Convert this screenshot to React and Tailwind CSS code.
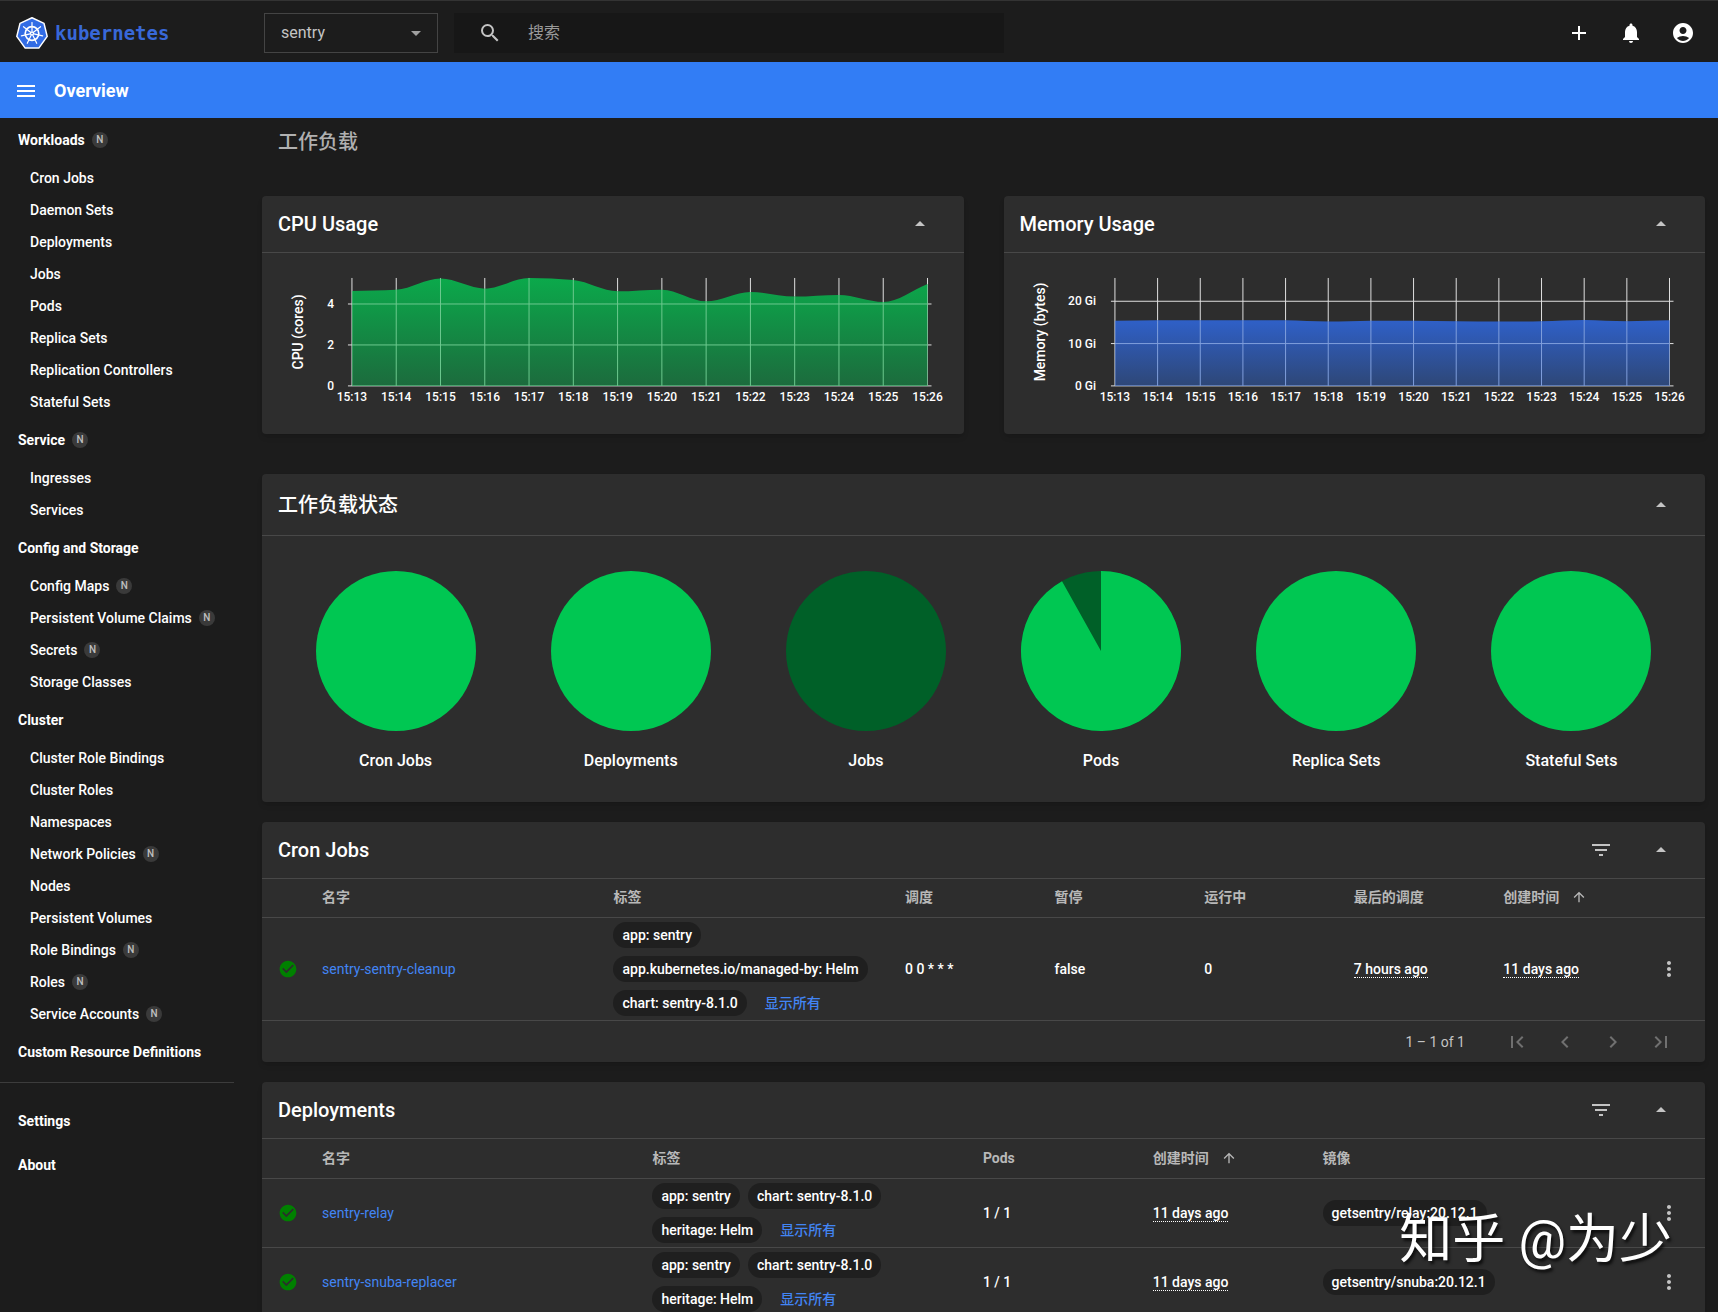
import React from 'react'
import {
  MdAccountCircle,
  MdAdd,
  MdArrowDropDown,
  MdArrowDropUp,
  MdArrowUpward,
  MdCheckCircle,
  MdChevronLeft,
  MdChevronRight,
  MdFilterList,
  MdFirstPage,
  MdLastPage,
  MdMenu,
  MdMoreVert,
  MdNotifications,
  MdSearch
} from 'react-icons/md'

const navSections = [
  {
    title: 'Workloads',
    namespaced: true,
    items: [
      { name: 'Cron Jobs' },
      { name: 'Daemon Sets' },
      { name: 'Deployments' },
      { name: 'Jobs' },
      { name: 'Pods' },
      { name: 'Replica Sets' },
      { name: 'Replication Controllers' },
      { name: 'Stateful Sets' }
    ]
  },
  {
    title: 'Service',
    namespaced: true,
    items: [{ name: 'Ingresses' }, { name: 'Services' }]
  },
  {
    title: 'Config and Storage',
    items: [
      { name: 'Config Maps', namespaced: true },
      { name: 'Persistent Volume Claims', namespaced: true },
      { name: 'Secrets', namespaced: true },
      { name: 'Storage Classes' }
    ]
  },
  {
    title: 'Cluster',
    items: [
      { name: 'Cluster Role Bindings' },
      { name: 'Cluster Roles' },
      { name: 'Namespaces' },
      { name: 'Network Policies', namespaced: true },
      { name: 'Nodes' },
      { name: 'Persistent Volumes' },
      { name: 'Role Bindings', namespaced: true },
      { name: 'Roles', namespaced: true },
      { name: 'Service Accounts', namespaced: true }
    ]
  },
  { title: 'Custom Resource Definitions', items: [] }
]

const times = [
  '15:13', '15:14', '15:15', '15:16', '15:17', '15:18', '15:19',
  '15:20', '15:21', '15:22', '15:23', '15:24', '15:25', '15:26'
]

const cpuValues = [4.63, 4.69, 5.24, 4.75, 5.27, 5.17, 4.62, 4.7, 4.13, 4.59, 4.36, 4.44, 4.1, 4.98]
const memoryValues = [15.4, 15.5, 15.5, 15.5, 15.5, 15.2, 15.4, 15.4, 15.3, 15.2, 15.3, 15.6, 15.3, 15.5]

// share = part of the pie that is running
const statuses = [
  { name: 'Cron Jobs', share: 1 },
  { name: 'Deployments', share: 1 },
  { name: 'Jobs', share: 0 },
  { name: 'Pods', share: 0.919 },
  { name: 'Replica Sets', share: 1 },
  { name: 'Stateful Sets', share: 1 }
]

const deployments = [
  { name: 'sentry-relay', image: 'getsentry/relay:20.12.1' },
  { name: 'sentry-snuba-replacer', image: 'getsentry/snuba:20.12.1' }
]

// Monotone cubic through the points, so the area never overshoots its values
const monotonePath = (points) => {
  const n = points.length
  const slopes = []
  for (let i = 0; i < n - 1; i++) {
    slopes.push((points[i + 1].y - points[i].y) / (points[i + 1].x - points[i].x))
  }
  const tangents = points.map((_, i) => {
    if (i === 0) return slopes[0]
    if (i === n - 1) return slopes[n - 2]
    const a = slopes[i - 1]
    const b = slopes[i]
    if (a * b <= 0) return 0
    return Math.sign(a) * Math.min(Math.abs(a), Math.abs(b), Math.abs(a + b) / 4) * 2
  })
  let d = `M${points[0].x},${points[0].y}`
  for (let i = 0; i < n - 1; i++) {
    const p = points[i]
    const q = points[i + 1]
    const dx = (q.x - p.x) / 3
    d += `C${p.x + dx},${p.y + dx * tangents[i]} ${q.x - dx},${q.y - dx * tangents[i + 1]} ${q.x},${q.y}`
  }
  return d
}

const KubernetesLogo = () => {
  const spokes = [0, 1, 2, 3, 4, 5, 6].map((i) => (i * 360) / 7)
  return (
    <svg viewBox="0 0 32 32" className="w-8 h-8 shrink-0" aria-hidden="true">
      <path
        d="M16 0.8 L28 6.4 L31.2 19.4 L22.8 31.1 H9.2 L0.8 19.4 L4 6.4 Z"
        fill="#326ce5"
        stroke="#fff"
        strokeWidth="1.5"
        strokeLinejoin="round"
      />
      <g fill="none" stroke="#fff" strokeLinecap="round">
        <circle cx="16" cy="16.5" r="6.8" strokeWidth="1.7" />
        {spokes.map((angle) => (
          <path key={angle} d="M16 14.6 V5.6" strokeWidth="1.2" transform={`rotate(${angle} 16 16.5)`} />
        ))}
      </g>
      <circle cx="16" cy="16.5" r="2.1" fill="#fff" />
      <circle cx="16" cy="16.5" r="0.8" fill="#326ce5" />
    </svg>
  )
}

const Badge = () => (
  <span className="w-4 h-4 rounded-full bg-[#3a3a3a] text-[#c0c0c0] text-[10px] font-medium flex items-center justify-center">
    N
  </span>
)

const IconButton = ({ icon: Icon, label, className = '' }) => (
  <button type="button" aria-label={label} className={`w-6 h-6 flex items-center justify-center ${className}`}>
    <Icon className="w-6 h-6" />
  </button>
)

const Header = () => (
  <header className="h-[62px] shrink-0 border-t border-[#333333] flex items-center pt-0.5 pl-4 pr-[23px]">
    <a href="#" className="w-[248px] shrink-0 flex items-center gap-[7px] text-[#3868d8]">
      <KubernetesLogo />
      <span className="font-['DejaVu_Sans_Mono',monospace] text-[19px] leading-6 font-bold">kubernetes</span>
    </a>
    <div className="relative w-[174px] shrink-0">
      <select
        aria-label="Namespace"
        className="appearance-none w-full h-10 pl-4 pr-10 border border-[#444444] bg-transparent text-[#c4c4c4] text-base"
      >
        <option>sentry</option>
      </select>
      <MdArrowDropDown className="absolute right-2.5 top-2 w-6 h-6 text-[#a0a0a0] pointer-events-none" />
    </div>
    <div className="ml-4 w-[550px] h-10 bg-[#171717] flex items-center pl-6">
      <MdSearch className="w-6 h-6 shrink-0 text-[#c4c4c4]" />
      <input
        type="search"
        aria-label="搜索"
        placeholder="搜索"
        className="flex-1 min-w-0 h-full pl-[26px] bg-transparent outline-none text-base placeholder-[#9a9a9a]"
      />
    </div>
    <div className="ml-auto flex items-center gap-7">
      <IconButton icon={MdAdd} label="Create" />
      <IconButton icon={MdNotifications} label="Notifications" />
      <IconButton icon={MdAccountCircle} label="Account" />
    </div>
  </header>
)

const Sidebar = () => (
  <nav aria-label="Main" className="w-[234px] shrink-0 text-sm leading-5">
    {navSections.map((section) => (
      <div key={section.title}>
        <div className="h-11 pl-[18px] flex items-center gap-[7px] font-bold">
          <a href="#">{section.title}</a>
          {section.namespaced && <Badge />}
        </div>
        <ul>
          {section.items.map((item) => (
            <li key={item.name} className="h-8 pl-[30px] flex items-center gap-[7px] font-medium">
              <a href="#">{item.name}</a>
              {item.namespaced && <Badge />}
            </li>
          ))}
        </ul>
      </div>
    ))}
    <div className="mt-2 mb-4 border-t border-[#3c3c3c]" />
    {['Settings', 'About'].map((name) => (
      <div key={name} className="h-11 pl-[18px] flex items-center font-bold">
        <a href="#">{name}</a>
      </div>
    ))}
  </nav>
)

const Card = ({ title, filter, tall, children }) => (
  <section className="bg-[#2d2d2d] rounded shadow-md">
    <div
      className={`border-b border-[#484848] pl-4 pr-8 flex items-center ${tall ? 'h-[62px] pt-0.5' : 'h-[57px]'}`}
    >
      <h2 className="text-xl leading-6 font-medium">{title}</h2>
      <div className="ml-auto flex items-center gap-9 text-[#c4c4c4]">
        {filter && <IconButton icon={MdFilterList} label="Filter" />}
        <IconButton icon={MdArrowDropUp} label="Collapse" />
      </div>
    </div>
    {children}
  </section>
)

const UsageChart = ({ id, label, labelX, left, right, tickX, max, ticks, unit, values, colors }) => {
  const bottom = 133
  const top = 25
  const step = (right - left) / (values.length - 1)
  const toX = (i) => left + i * step
  const toY = (value) => bottom - (value / max) * (bottom - top)
  const line = monotonePath(values.map((value, i) => ({ x: toX(i), y: toY(value) })))
  const area = `${line}L${right},${bottom}L${left},${bottom}Z`
  const grid = [
    ...ticks.map((tick) => `M${left - 4},${toY(tick)}H${right + 4}`),
    ...times.map((_, i) => `M${toX(i)},${top}V${bottom}`)
  ].join('')

  return (
    <svg viewBox="0 0 702 181" className="block w-full h-auto" role="img" aria-label={label}>
      <defs>
        <linearGradient id={id} x1="0" y1="0" x2="0" y2="1">
          <stop offset="0" stopColor={colors[0]} />
          <stop offset="1" stopColor={colors[1]} />
        </linearGradient>
        <clipPath id={`${id}-area`}>
          <path d={area} />
        </clipPath>
      </defs>

      {/* Grid: bright outside the area, tinted where the area covers it */}
      <path d={grid} stroke="#e0e0e0" />
      <path d={area} fill={`url(#${id})`} />
      <path d={grid} stroke={colors[2]} clipPath={`url(#${id}-area)`} />

      <g fill="#fff" fontSize="12" fontWeight="500">
        {ticks.map((tick) => (
          <text key={tick} x={tickX} y={toY(tick) + 4} textAnchor="end">
            {tick}{unit}
          </text>
        ))}
        {times.map((time, i) => (
          <text key={time} x={toX(i)} y="148" textAnchor="middle">
            {time}
          </text>
        ))}
      </g>
      <text
        fill="#fff"
        fontSize="14"
        fontWeight="500"
        textAnchor="middle"
        transform={`translate(${labelX} 79) rotate(-90)`}
      >
        {label}
      </text>
    </svg>
  )
}

const StatusPie = ({ name, share }) => {
  const angle = share * 2 * Math.PI
  const x = 80 + 80 * Math.sin(angle)
  const y = 80 - 80 * Math.cos(angle)
  return (
    <div className="flex flex-col items-center gap-[18px]">
      <svg viewBox="0 0 160 160" className="w-40 h-40" aria-hidden="true">
        <circle cx="80" cy="80" r="80" fill={share === 1 ? '#00c752' : '#006028'} />
        {share > 0 && share < 1 && (
          <path d={`M80 80 V0 A80 80 0 1 1 ${x} ${y} Z`} fill="#00c752" />
        )}
      </svg>
      <div className="text-base leading-6 font-medium">{name}</div>
    </div>
  )
}

const Chip = ({ children }) => (
  <span className="h-[26px] px-[9px] rounded-full bg-[#1f1f1f] flex items-center whitespace-nowrap">
    {children}
  </span>
)

const Labels = ({ labels }) => (
  <div className="flex flex-wrap gap-2 py-1">
    {labels.map((label) => (
      <Chip key={label}>{label}</Chip>
    ))}
    <a href="#" className="h-[26px] ml-2.5 flex items-center text-[#4285f4]">
      显示所有
    </a>
  </div>
)

const HeadRow = ({ columns }) => (
  <thead>
    <tr className="h-[39px] border-b border-[#484848] text-left text-[#b8b8b8]">
      <th aria-label="Status" />
      {columns.map((column) => (
        <th key={column} className="font-bold pb-0.5" aria-sort={column === '创建时间' ? 'ascending' : undefined}>
          <span className="flex items-center gap-3">
            {column}
            {column === '创建时间' && <MdArrowUpward className="w-4 h-4" />}
          </span>
        </th>
      ))}
      <th aria-label="Actions" />
    </tr>
  </thead>
)

const StatusCell = () => (
  <td className="pl-4">
    <MdCheckCircle className="w-5 h-5 text-[#008000]" />
  </td>
)

const MenuCell = () => (
  <td className="pl-1">
    <IconButton icon={MdMoreVert} label="Actions" className="text-[#c4c4c4]" />
  </td>
)

const NameCell = ({ name }) => (
  <td>
    <a href="#" className="font-normal text-[#4285f4]">{name}</a>
  </td>
)

const Ago = ({ children }) => (
  <span className="border-b border-dotted border-white leading-4 inline-block">{children}</span>
)

const CronJobsTable = () => (
  <>
    <table className="w-full table-fixed text-sm leading-5 font-medium">
      <colgroup>
        <col className="w-[60px]" />
        <col className="w-[20.2%]" />
        <col className="w-[20.2%]" />
        <col />
        <col />
        <col />
        <col />
        <col />
        <col className="w-[52px]" />
      </colgroup>
      <HeadRow columns={['名字', '标签', '调度', '暂停', '运行中', '最后的调度', '创建时间']} />
      <tbody>
        <tr className="border-b border-[#484848]">
          <StatusCell />
          <NameCell name="sentry-sentry-cleanup" />
          <td>
            <Labels labels={['app: sentry', 'app.kubernetes.io/managed-by: Helm', 'chart: sentry-8.1.0']} />
          </td>
          <td>0 0 * * *</td>
          <td>false</td>
          <td>0</td>
          <td><Ago>7 hours ago</Ago></td>
          <td><Ago>11 days ago</Ago></td>
          <MenuCell />
        </tr>
      </tbody>
    </table>
    <div className="h-[41px] pr-8 flex items-center justify-end text-sm text-[#c4c4c4]">
      <span className="mr-10">1 – 1 of 1</span>
      <div className="flex items-center gap-6 text-[#707070]">
        <IconButton icon={MdFirstPage} label="First page" />
        <IconButton icon={MdChevronLeft} label="Previous page" />
        <IconButton icon={MdChevronRight} label="Next page" />
        <IconButton icon={MdLastPage} label="Last page" />
      </div>
    </div>
  </>
)

const DeploymentsTable = () => (
  <table className="w-full table-fixed text-sm leading-5 font-medium">
    <colgroup>
      <col className="w-[60px]" />
      <col className="w-[22.9%]" />
      <col className="w-[22.9%]" />
      <col />
      <col />
      <col className="w-[22.9%]" />
      <col className="w-[52px]" />
    </colgroup>
    <HeadRow columns={['名字', '标签', 'Pods', '创建时间', '镜像']} />
    <tbody>
      {deployments.map((deployment) => (
        <tr key={deployment.name} className="border-b border-[#484848]">
          <StatusCell />
          <NameCell name={deployment.name} />
          <td className="pr-16">
            <Labels labels={['app: sentry', 'chart: sentry-8.1.0', 'heritage: Helm']} />
          </td>
          <td>1 / 1</td>
          <td><Ago>11 days ago</Ago></td>
          <td>
            <div className="flex">
              <Chip>{deployment.image}</Chip>
            </div>
          </td>
          <MenuCell />
        </tr>
      ))}
    </tbody>
  </table>
)

const App = () => {
  return (
    <div className="relative h-screen overflow-hidden flex flex-col bg-[#1c1c1c] text-white font-['Roboto','Noto_Sans_CJK_SC',sans-serif]">
      <Header />

      {/* Page title bar */}
      <div className="h-14 shrink-0 bg-[#327df5] pt-0.5 pl-3.5 flex items-center gap-4">
        <IconButton icon={MdMenu} label="Toggle menu" />
        <h1 className="text-lg leading-6 font-bold">Overview</h1>
      </div>

      <div className="flex-1 min-h-0 flex">
        <Sidebar />

        <main className="flex-1 min-w-0 pl-7 pr-[13px]">
          <div className="h-[78px] pt-2.5 pl-4 text-xl leading-7 font-medium text-[#b0b0b0]">工作负载</div>

          <div className="grid grid-cols-2 gap-10">
            <Card title="CPU Usage">
              <UsageChart
                id="cpu"
                label="CPU (cores)"
                labelX={41}
                left={90}
                right={666}
                tickX={72}
                max={5.27}
                ticks={[0, 2, 4]}
                unit=""
                values={cpuValues}
                colors={['#0ba94b', '#1c6b3d', '#6cc98f']}
              />
            </Card>
            <Card title="Memory Usage">
              <UsageChart
                id="memory"
                label="Memory (bytes)"
                labelX={41}
                left={111}
                right={666}
                tickX={92}
                max={25.5}
                ticks={[0, 10, 20]}
                unit=" Gi"
                values={memoryValues}
                colors={['#2f60c8', '#2e4777', '#7f9fdc']}
              />
            </Card>
          </div>

          <div className="mt-10 flex flex-col gap-5">
            <Card title="工作负载状态" tall>
              <div className="px-4 pt-[35px] pb-[29px] grid grid-cols-6">
                {statuses.map((status) => (
                  <StatusPie key={status.name} {...status} />
                ))}
              </div>
            </Card>
            <Card title="Cron Jobs" filter>
              <CronJobsTable />
            </Card>
            <Card title="Deployments" filter>
              <DeploymentsTable />
            </Card>
          </div>
        </main>
      </div>

      {/* Watermark */}
      <div className="absolute right-[46px] bottom-10 text-[53px] leading-[64px] pointer-events-none [text-shadow:2px_3px_3px_rgba(0,0,0,0.7)]">
        知乎 @为少
      </div>
    </div>
  )
}

export default App
